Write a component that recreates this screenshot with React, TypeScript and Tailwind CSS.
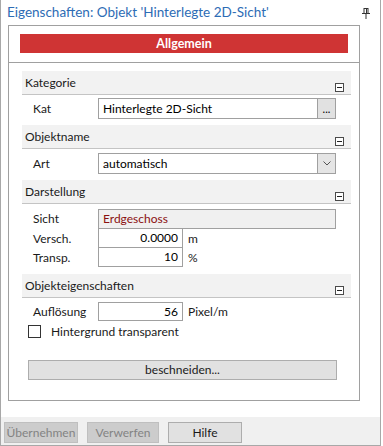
import React from 'react';

const font = 'font-["Segoe_UI","Lato","Noto_Sans",sans-serif]';

const MinusBox = () => (
  <div className="absolute right-[7px] bottom-[2px] w-[9px] h-[9px] border border-[#4a4a4a] bg-white flex items-center justify-center">
    <div className="w-[5px] h-px bg-[#222]" />
  </div>
);

const Header: React.FC<{ title: string }> = ({ title }) => (
  <div className="relative h-[24px] bg-[#f2f2f2] border-b border-[#c4c4c4] pl-[3px] pt-[4px] text-[12px] leading-[15px] text-[#1a1a1a]">
    {title}
    <MinusBox />
  </div>
);

const Label: React.FC<{ text: string }> = ({ text }) => (
  <div className="w-[76px] pl-[11px] text-[12px] text-[#1a1a1a] shrink-0">{text}</div>
);

const NumberRow: React.FC<{ label: string; value: string; unit: string }> = ({ label, value, unit }) => (
  <div className="flex items-center h-[19px]">
    <Label text={label} />
    <div className="w-[85px] h-[19px] border border-t-0 border-[#a0a0a0] bg-white text-right pr-[4px] text-[12px] leading-[18px]">
      {value}
    </div>
    <span className="ml-[5px] text-[12px] text-[#1a1a1a]">{unit}</span>
  </div>
);

export default function App() {
  return (
    <div className={`${font} w-[381px] h-[446px] bg-white border-x border-b border-[#a8a8a8] flex flex-col`}>
      {/* title */}
      <div className="relative h-[25px] pl-[6px] pt-[2px] text-[13.5px] leading-[20px] text-[#2d6cb5] shrink-0">
        Eigenschaften: Objekt 'Hinterlegte 2D-Sicht'
        <svg className="absolute right-[10px] top-[8px]" width="8" height="11" viewBox="0 0 8 11">
          <rect x="2" y="0.5" width="4" height="5" fill="none" stroke="#333" />
          <rect x="4" y="1" width="1" height="4" fill="#333" />
          <rect x="0" y="5" width="8" height="1" fill="#333" />
          <rect x="3.5" y="6" width="1" height="5" fill="#333" />
        </svg>
      </div>

      <div className="flex-1 pl-[7px]">
        <div className="w-[352px] h-[376px] border border-[#a0a0a0] flex flex-col">
          <div className="h-[37px] border-b border-[#a0a0a0] px-[11px] pt-[8px] shrink-0">
            <div className="h-[19px] bg-[#cf3434] text-white font-bold text-[12.5px] leading-[19px] text-center">
              Allgemein
            </div>
          </div>

          <div className="ml-[13px] w-[329px] pt-[8px] flex flex-col">
            <Header title="Kategorie" />
            <div className="flex items-center h-[21px] mt-[3px]">
              <Label text="Kat" />
              <div className="flex w-[238px] h-[21px] border border-[#a0a0a0]">
                <div className="flex-1 bg-white pl-[4px] text-[12px] leading-[19px]">Hinterlegte 2D-Sicht</div>
                <div className="w-[18px] border-l border-[#a0a0a0] bg-[#e1e1e1] text-[11px] leading-[19px] text-center">...</div>
              </div>
            </div>

            <div className="mt-[6px]">
              <Header title="Objektname" />
            </div>
            <div className="flex items-center h-[21px] mt-[4px]">
              <Label text="Art" />
              <div className="flex w-[238px] h-[21px] border border-[#a0a0a0]">
                <div className="flex-1 bg-white pl-[4px] text-[12px] leading-[19px]">automatisch</div>
                <div className="w-[18px] border-l border-[#a0a0a0] bg-[#e5e5e5] flex items-center justify-center">
                  <svg width="8" height="5" viewBox="0 0 8 5">
                    <path d="M0.5 0.5 L4 4 L7.5 0.5" fill="none" stroke="#555" strokeWidth="1" />
                  </svg>
                </div>
              </div>
            </div>

            <div className="mt-[6px]">
              <Header title="Darstellung" />
            </div>
            <div className="flex items-center h-[20px] mt-[5px]">
              <Label text="Sicht" />
              <div className="w-[238px] h-[20px] border border-[#a0a0a0] bg-[#f0f0f0] pl-[4px] text-[12px] leading-[18px] text-[#8b1010]">
                Erdgeschoss
              </div>
            </div>
            <NumberRow label="Versch." value="0.0000" unit="m" />
            <NumberRow label="Transp." value="10" unit="%" />

            <div className="mt-[7px]">
              <Header title="Objekteigenschaften" />
            </div>
            <div className="flex items-center h-[19px] mt-[4px]">
              <Label text="Auflösung" />
              <div className="w-[85px] h-[19px] border border-[#a0a0a0] bg-white text-right pr-[4px] text-[12px] leading-[17px]">
                56
              </div>
              <span className="ml-[5px] text-[12px] text-[#1a1a1a]">Pixel/m</span>
            </div>
            <div className="flex items-center mt-[4px] pl-[6px] h-[13px]">
              <div className="w-[13px] h-[13px] border border-[#333] bg-white shrink-0" />
              <span className="ml-[10px] text-[12px] leading-[13px] text-[#1a1a1a]">Hintergrund transparent</span>
            </div>
            <div className="ml-[6px] mt-[22px] w-[309px] h-[20px] border border-[#adadad] bg-[#e1e1e1] text-center text-[12px] leading-[18px] text-[#1a1a1a]">
              beschneiden...
            </div>
          </div>
        </div>
      </div>

      <div className="h-[28px] bg-[#f0f0f0] flex items-start gap-[9px] pl-[3px] pt-[5px] shrink-0">
        <div className="w-[74px] h-[21px] border border-[#bfbfbf] bg-[#cccccc] text-center text-[12px] leading-[19px] text-[#838383]">
          Übernehmen
        </div>
        <div className="w-[72px] h-[21px] border border-[#bfbfbf] bg-[#cccccc] text-center text-[12px] leading-[19px] text-[#838383]">
          Verwerfen
        </div>
        <div className="w-[74px] h-[21px] border border-[#adadad] bg-[#e1e1e1] text-center text-[12px] leading-[19px] text-[#1a1a1a]">
          Hilfe
        </div>
      </div>
    </div>
  );
}
